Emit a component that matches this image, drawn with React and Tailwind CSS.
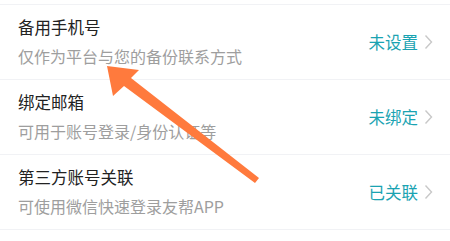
const rows = [
    { title: '备用手机号', desc: '仅作为平台与您的备份联系方式', status: '未设置' },
    { title: '绑定邮箱', desc: '可用于账号登录/身份认证等', status: '未绑定' },
    { title: '第三方账号关联', desc: '可使用微信快速登录友帮APP', status: '已关联' },
];

function Chevron() {
    return (
        <svg width="9" height="16" viewBox="0 0 9 16" fill="none" className="ml-[6px]">
            <path d="M1.5 1.5 L7.5 8 L1.5 14.5" stroke="#c8c8c8" strokeWidth="1.4" />
        </svg>
    );
}

export default function App() {
    return (
        <div
            className="relative w-[450px] h-[241px] bg-white overflow-hidden"
            style={{ fontFamily: '"Noto Sans CJK SC", "Noto Sans", sans-serif' }}
        >
            <div className="pt-[4px]">
                <div className="border-t border-[#f1f2f5]">
                    {rows.map((row) => (
                        <div
                            key={row.title}
                            className="flex items-center justify-between border-b border-[#f1f2f5] pl-[18px] pr-[17px] pt-[10px] pb-[11px]"
                        >
                            <div>
                                <div className="text-[16.5px] leading-6 text-[#222]">{row.title}</div>
                                <div className="mt-[5px] text-[16px] leading-6 text-[#9e9e9e]">{row.desc}</div>
                            </div>
                            <div className="flex items-center">
                                <span className="text-[16.5px] leading-6 text-[#1aa3b2]">{row.status}</span>
                                <Chevron />
                            </div>
                        </div>
                    ))}
                </div>
            </div>

            {/* annotation arrow */}
            <svg className="absolute left-0 top-0 pointer-events-none" width="450" height="241" viewBox="0 0 450 241">
                <polygon
                    points="107,66 113,96 124,86 255,183 259,178 131,78 139,70"
                    fill="#ff7a3d"
                />
            </svg>
        </div>
    );
}
